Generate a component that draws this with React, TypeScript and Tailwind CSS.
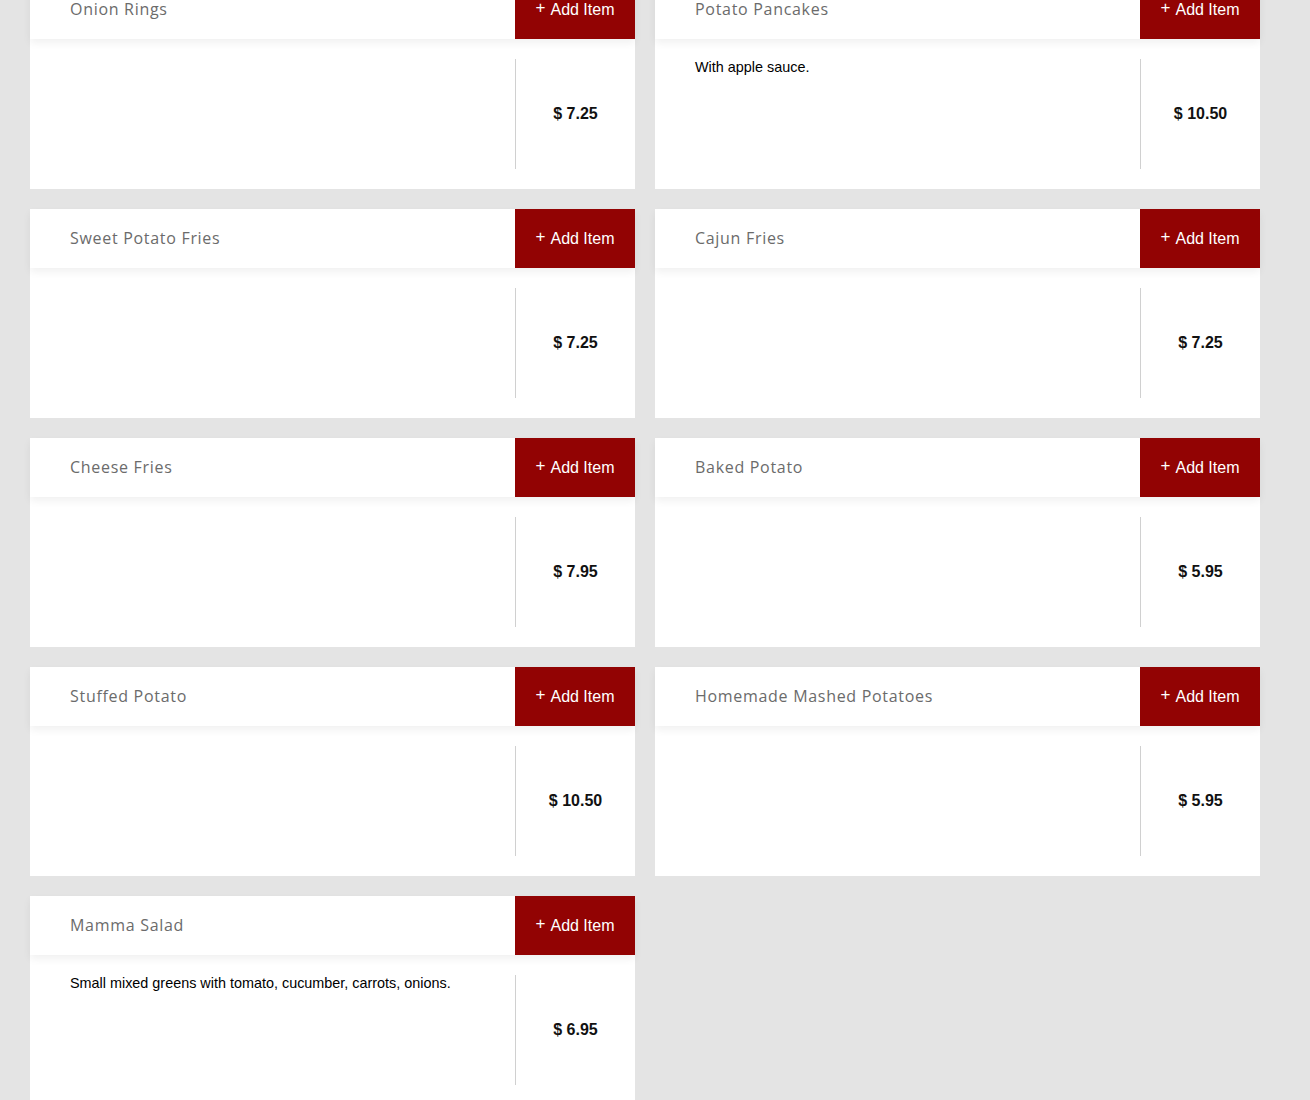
const items = [
  { name: 'Onion Rings', desc: '', price: '$ 7.25' },
  { name: 'Potato Pancakes', desc: 'With apple sauce.', price: '$ 10.50' },
  { name: 'Sweet Potato Fries', desc: '', price: '$ 7.25' },
  { name: 'Cajun Fries', desc: '', price: '$ 7.25' },
  { name: 'Cheese Fries', desc: '', price: '$ 7.95' },
  { name: 'Baked Potato', desc: '', price: '$ 5.95' },
  { name: 'Stuffed Potato', desc: '', price: '$ 10.50' },
  { name: 'Homemade Mashed Potatoes', desc: '', price: '$ 5.95' },
  { name: 'Mamma Salad', desc: 'Small mixed greens with tomato, cucumber, carrots, onions.', price: '$ 6.95' },
]

function MenuCard({ name, desc, price }: { name: string; desc: string; price: string }) {
  return (
    <div className="bg-white h-[209px] flex flex-col">
      {/* header */}
      <div className="flex h-[59px] relative shadow-[0_4px_8px_rgba(0,0,0,0.06)] z-10">
        <div className="flex-1 flex items-center pl-10 pb-[1px] text-[16px] text-[#6b6b6b] [font-family:'Open_Sans',sans-serif] tracking-[0.7px]">
          {name}
        </div>
        <button className="w-[120px] bg-[#920303] text-white flex items-center justify-center text-[16px] [font-family:'Liberation_Sans',Arial,sans-serif]">
          <span className="text-[17px] leading-none -translate-y-[2px] mr-[5px]">+</span>
          <span>Add Item</span>
        </button>
      </div>
      {/* body */}
      <div className="flex flex-1 bg-white [font-family:'Liberation_Sans',Arial,sans-serif]">
        <div className="flex-1 px-10 pt-5 text-[14.4px] leading-[16px] text-black">
          {desc}
        </div>
        <div className="w-[120px] my-5 border-l border-[#d0d0d0] flex items-center justify-center font-bold text-[16px] text-[#111]">
          {price}
        </div>
      </div>
    </div>
  )
}

export default function App() {
  return (
    <div className="min-h-screen bg-[#e4e4e4] overflow-hidden">
      <div className="w-[1230px] ml-[30px] -mt-[20px] grid grid-cols-2 gap-5 pb-10">
        {items.map((item, i) => (
          <MenuCard key={i} {...item} />
        ))}
      </div>
    </div>
  )
}
